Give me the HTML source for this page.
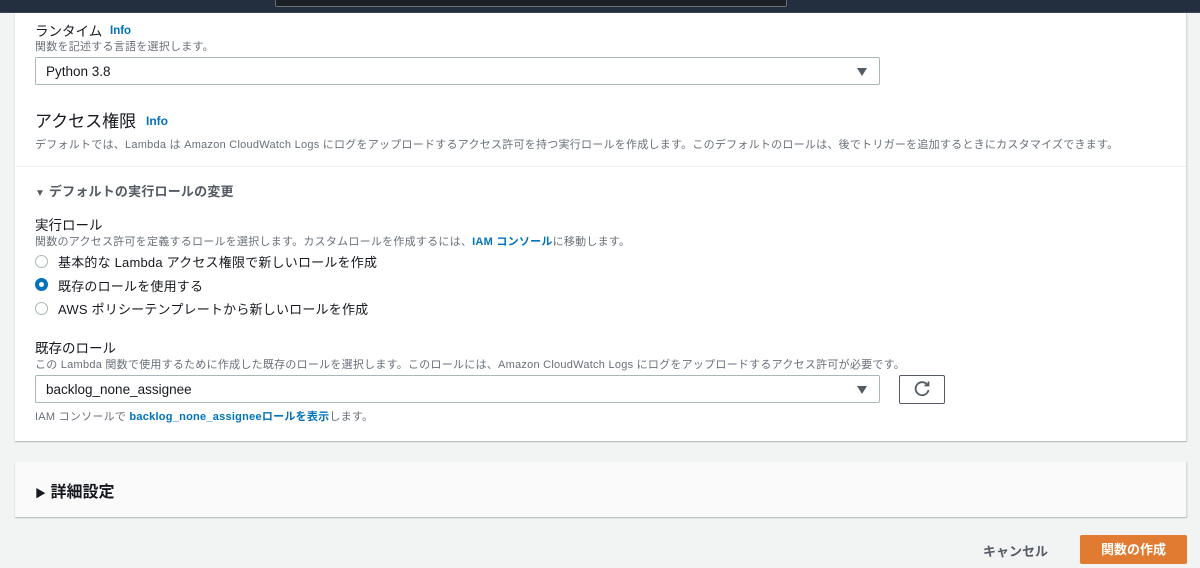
<!DOCTYPE html>
<html><head><meta charset="utf-8"><style>
*{margin:0;padding:0;box-sizing:border-box}
body{width:1200px;height:568px;background:#f2f3f3;font-family:"Liberation Sans","Noto Sans CJK JP",sans-serif;color:#16191f;position:relative;overflow:hidden}
.abs{position:absolute}
.top{left:0;top:0;width:1200px;height:13px;background:#232f3e;border-bottom:1px solid #3a4556}
.search{left:275px;top:-2px;width:512px;height:9px;background:#1b1f26;border:1px solid #687078;border-top:none;border-radius:0 0 2px 2px}
.panel{left:15px;top:13px;width:1172px;height:428px;background:#fff;box-shadow:0 1px 1px #aab7b8;border-right:1px solid #d5dbdb}
.t{position:absolute;white-space:nowrap}
.lbl{font-size:13.5px;color:#16191f}
.desc{font-size:11px;color:#687078;letter-spacing:0.25px}
.info{font-size:11.5px;color:#0073bb;font-weight:bold}
.link{color:#0073bb;font-weight:bold}
.sel{position:absolute;height:28px;border:1px solid #aab7b8;border-radius:2px;background:#fff;font-size:13.5px;padding:6px 10px;color:#16191f}
.arr{position:absolute;right:12px;top:10px;width:0;height:0;border-left:5px solid transparent;border-right:5px solid transparent;border-top:8px solid #545b64}
.radio{position:absolute;width:13px;height:13px;border-radius:50%;border:1px solid #aab7b8;background:#fff}
.radio.on{border:4px solid #0073bb}
.p2{left:15px;top:462px;width:1172px;height:55px;background:#fafafa;box-shadow:0 1px 1px #aab7b8;border-right:1px solid #d5dbdb}
.rt{font-size:13px;letter-spacing:0.2px}
</style></head><body>
<div class="abs top"></div>
<div class="abs search"></div>
<div class="abs panel"></div>

<div class="t lbl" style="left:35px;top:20px">ランタイム</div>
<div class="t info" style="left:110px;top:25px">Info</div>
<div class="t desc" style="left:35px;top:38px">関数を記述する言語を選択します。</div>
<div class="sel" style="left:35px;top:57px;width:845px">Python 3.8<div class="arr"></div></div>

<div class="t" style="left:35px;top:107px;font-size:17px">アクセス権限</div>
<div class="t info" style="left:146px;top:114px;font-size:12px">Info</div>
<div class="t desc" style="left:35px;top:136px">デフォルトでは、Lambda は Amazon CloudWatch Logs にログをアップロードするアクセス許可を持つ実行ロールを作成します。このデフォルトのロールは、後でトリガーを追加するときにカスタマイズできます。</div>
<div class="abs" style="left:16px;top:166px;width:1170px;height:1px;background:#eaeded"></div>

<div class="t" style="left:35px;top:181px;font-size:13px;font-weight:bold;color:#545b64;letter-spacing:0.2px"><span style="font-size:10px">▼</span> デフォルトの実行ロールの変更</div>

<div class="t lbl" style="left:35px;top:214px">実行ロール</div>
<div class="t desc" style="left:35px;top:233px">関数のアクセス許可を定義するロールを選択します。カスタムロールを作成するには、<span class="link">IAM コンソール</span>に移動します。</div>
<div class="radio" style="left:35px;top:255px"></div>
<div class="t rt" style="left:58px;top:252px">基本的な Lambda アクセス権限で新しいロールを作成</div>
<div class="radio on" style="left:35px;top:278px"></div>
<div class="t rt" style="left:58px;top:276px">既存のロールを使用する</div>
<div class="radio" style="left:35px;top:302px"></div>
<div class="t rt" style="left:58px;top:299px">AWS ポリシーテンプレートから新しいロールを作成</div>

<div class="t lbl" style="left:35px;top:337px">既存のロール</div>
<div class="t desc" style="left:35px;top:356px">この Lambda 関数で使用するために作成した既存のロールを選択します。このロールには、Amazon CloudWatch Logs にログをアップロードするアクセス許可が必要です。</div>
<div class="sel" style="left:35px;top:375px;width:845px">backlog_none_assignee<div class="arr"></div></div>
<div class="abs" style="left:899px;top:375px;width:46px;height:29px;border:1px solid #545b64;border-radius:2px;background:#fff">
<svg width="44" height="27" viewBox="0 0 44 27"><path d="M27.5 9 A6.5 6.5 0 1 0 28.5 14" fill="none" stroke="#545b64" stroke-width="1.8"/><path d="M24.5 9.5 L28.5 9.5 L28.5 5.5" fill="none" stroke="#545b64" stroke-width="1.8"/></svg></div>
<div class="t desc" style="left:35px;top:408px">IAM コンソールで <span class="link">backlog_none_assigneeロールを表示</span>します。</div>

<div class="abs p2"></div>
<div class="t" style="left:35px;top:478px;font-size:16px;font-weight:bold"><span style="font-size:11px">▶</span> 詳細設定</div>

<div class="t" style="left:983px;top:541px;font-size:13px;font-weight:bold;color:#545b64">キャンセル</div>
<div class="abs" style="left:1080px;top:535px;width:107px;height:29px;background:#e07b31;border-radius:2px;color:#fff;font-size:13px;font-weight:bold;text-align:center;line-height:29px">関数の作成</div>
</body></html>
